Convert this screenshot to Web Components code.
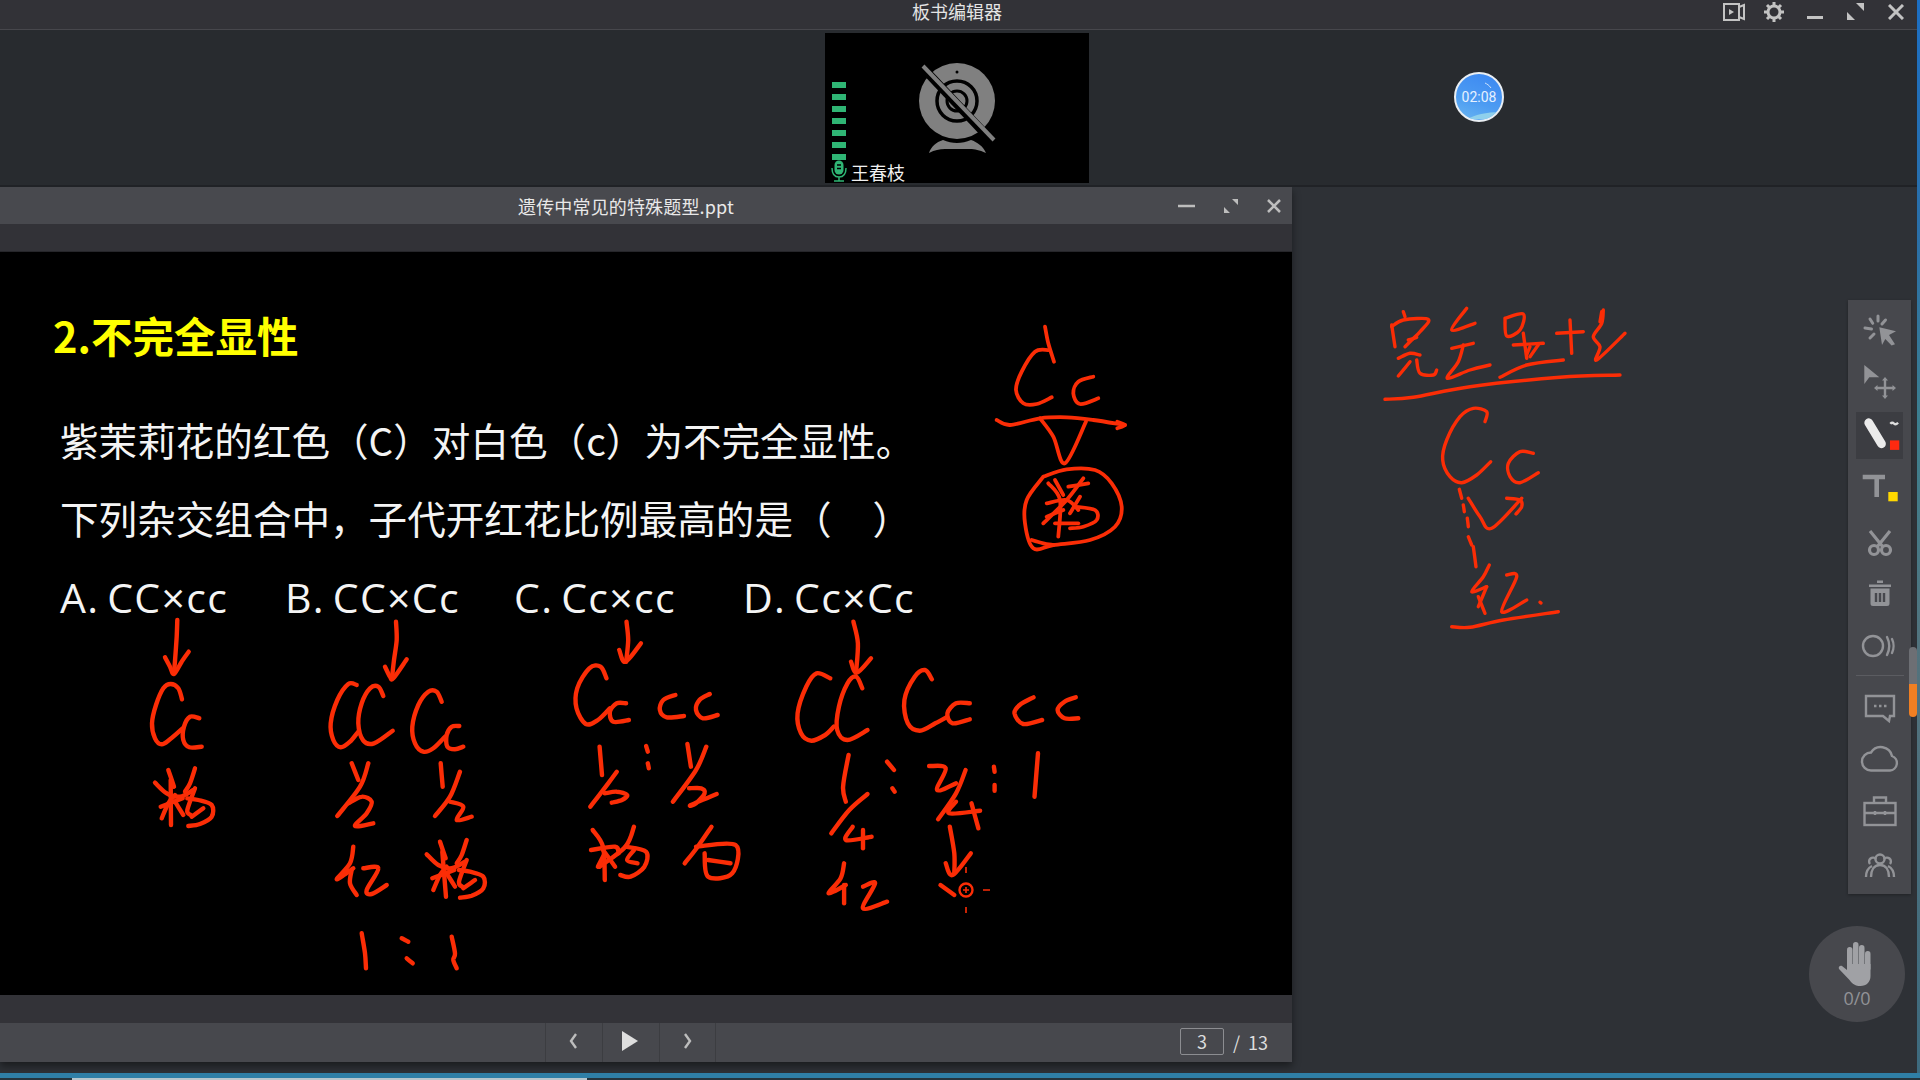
<!DOCTYPE html>
<html lang="zh">
<head>
<meta charset="utf-8">
<title>板书编辑器</title>
<style>
  html, body { margin: 0; height: 100%; background: #2e3136; overflow: hidden; }
  body { font-family: "Noto Sans CJK SC", "Open Sans", sans-serif; }
</style>
</head>
<body>
<desk-screen>
  <app-titlebar title-text="板书编辑器"></app-titlebar>
  <video-strip>
    <video-tile name="王春枝"></video-tile>
    <timer-badge slot="float">02:08</timer-badge>
  </video-strip>
  <work-area>
    <ppt-window title-text="遗传中常见的特殊题型.ppt" page="3" total="13">
      <slide-page></slide-page>
    </ppt-window>
    <side-panel slot="side"></side-panel>
  </work-area>
</desk-screen>

<script>
// handwriting, written in coordinates of the crops I measured from
const INK = {
  slide: [
    { x: 100, y: 620, sx: 1 / 3, sy: 1 / 3, w: 4.4, strokes: [
      "232,0 230,50 226,110 222,160", "195,112 210,140 222,162 245,125 266,95",
      "246,238 235,205 212,192 190,205 168,255 156,310 165,355 185,373 210,358 248,325",
      "298,295 270,290 252,320 250,360 268,382 305,380",
      "205,450 222,500", "285,445 270,490 255,515", "165,488 200,520 240,530 280,510",
      "212,480 213,615", "185,595 205,550 225,525", "225,545 250,585", "182,560 248,535",
      "262,535 295,540 335,555 335,590 300,612 265,618", "285,505 262,570 272,585", "275,590 310,565",
      "888,5 890,60 882,120 876,175", "855,140 870,170 880,175 920,118",
      "770,195 745,192 712,240 692,310 700,360 722,382 750,365 775,335",
      "850,228 835,200 810,205 785,250 775,310 790,362 822,370 878,332",
      "1025,245 1010,215 985,215 955,255 937,320 945,370 970,395 1000,385 1035,350",
      "1078,318 1055,320 1040,345 1042,380 1065,388 1090,380",
      "755,430 775,480", "805,430 780,500 712,588", "745,550 785,530 815,545 800,580 765,618 820,610",
      "1022,430 1028,500", "1080,455 1050,530 1005,588", "1050,545 1090,560 1070,600 1115,590",
      "760,680 750,730 710,778 760,745", "755,750 750,790 770,825", "790,745 835,745 800,810 815,822 860,795",
      "1020,665 1037,715", "1100,660 1085,705 1070,730", "980,703 1015,735 1055,745 1095,725",
      "1027,695 1038,830", "1000,810 1020,765 1040,740", "1040,760 1065,800", "997,775 1063,750",
      "1077,750 1110,755 1150,770 1150,805 1115,827 1080,833", "1100,720 1077,785 1087,800", "1090,805 1125,780",
      "785,940 795,1000 798,1045", "905,955 925,965", "920,1015 938,1030",
      "1055,950 1065,1000 1060,1020 1070,1045"
    ] },
    { x: 560, y: 620, sx: 1 / 2.904, sy: 1 / 3, w: 4.4, strokes: [
      "193,5 198,60 192,125", "172,90 190,125 235,70",
      "135,175 118,140 85,145 50,205 48,265 75,312 110,300 145,265",
      "192,250 165,250 145,275 155,305 200,300",
      "335,225 300,240 290,270 310,292 360,288", "435,222 405,240 395,270 415,295 458,285",
      "115,380 122,465", "165,455 140,490 88,560", "130,520 165,515 195,525 180,540 150,548",
      "250,378 255,395", "255,430 258,445",
      "370,372 380,440", "425,380 395,450 328,545", "375,505 410,505 420,520 395,550 380,555 455,522",
      "95,630 125,680 130,780", "215,620 190,680 115,740", "90,690 160,680 170,700",
      "130,700 110,740", "190,680 250,695 245,740 205,770 175,765", "215,690 195,720 225,730", "125,690 160,740",
      "440,620 400,680 362,730", "395,680 510,675 500,760 430,770 420,700", "430,720 495,730",
      "852,5 865,70 860,155", "845,125 862,158 903,115",
      "785,175 745,160 715,200 690,280 700,340 730,362 770,345 795,320",
      "878,205 860,170 835,190 810,260 805,330 835,360 893,330",
      "1080,178 1060,150 1030,170 1000,240 1010,310 1045,332 1090,310 1125,290",
      "1190,250 1150,250 1125,280 1140,310 1190,298",
      "1375,232 1335,255 1320,280 1345,312 1400,300", "1498,232 1465,245 1445,270 1465,295 1505,295",
      "838,405 822,500 830,545", "950,425 970,450", "965,505 972,515",
      "1072,438 1120,445 1095,510 1150,490", "1178,450 1150,520 1098,598",
      "1150,545 1130,580 1220,572", "1195,550 1215,625",
      "1260,440 1262,455", "1262,495 1262,512", "1388,400 1378,530",
      "893,522 840,570 788,640", "850,620 830,660 905,650", "880,630 880,685",
      "825,730 815,775 780,820 830,795", "825,795 825,850", "880,800 915,790 880,865 950,845",
      "1132,620 1145,700 1145,760", "1120,730 1140,765 1193,700", "1105,795 1145,825"
    ] },
    { x: 980, y: 310, sx: 1 / 3, sy: 1 / 3, w: 3.8, strokes: [
      "195,50 205,100 222,155", "205,120 165,125 125,185 108,240 130,280 170,282 215,262",
      "340,200 295,215 280,250 300,282 355,265",
      "50,330 90,345 180,325 260,322 340,330 435,345", "412,335 435,345 412,355",
      "180,325 220,380 255,460 318,335",
      "190,500 260,478 345,480 395,520 425,590 405,650 330,690 220,705 160,715 135,640 140,570 190,500",
      "155,690 190,700 220,705",
      "225,510 250,555", "310,505 260,570 190,640", "200,580 260,570 295,600", "205,520 240,570 235,680",
      "285,590 345,600 350,630 310,650 270,655", "300,560 270,610", "200,620 250,600",
      "265,530 325,520", "225,640 295,640"
    ] }
  ],
  side: [
    { x: 1370, y: 290, sx: 1 / 3, sy: 1 / 3, w: 3.4, strokes: [
      "100,65 105,80", "65,105 75,170", "65,110 100,90 175,88 150,125 125,150 105,170",
      "115,150 140,142", "85,205 120,190 150,195", "120,215 85,258", "140,210 150,250 190,255 200,240",
      "290,55 245,120 315,100", "245,175 310,160", "280,165 265,215 232,265 300,240 360,225",
      "405,85 460,72 450,120 410,138 405,85", "430,165 520,160", "460,130 470,205", "505,165 480,200", "480,170 470,195",
      "390,262 470,225 580,210",
      "600,90 605,190", "560,130 640,125", "700,60 695,100 670,140 690,170 680,210 765,130", "695,65 690,95",
      "45,328 130,322 300,290 570,262 750,255",
      "345,395 350,365 310,355 270,380 230,450 218,510 240,560 275,578 320,555 362,515",
      "490,490 450,485 415,520 420,560 450,578 505,548",
      "295,625 330,680 365,715 455,625", "410,625 450,630 455,650 438,672",
      "268,598 275,625", "280,645 283,665", "292,685 295,710", "295,740 305,765", "310,770 318,830",
      "358,825 340,860 305,905 350,890", "350,890 325,950", "325,920 345,970",
      "410,855 440,860 395,965 470,930", "510,937 513,939",
      "245,1010 300,1012 400,990 565,965"
    ] }
  ]
};

function smoothPath(str, g) {
  const p = str.split(" ").map((s) => {
    const [a, b] = s.split(",").map(Number);
    return [g.x + a * g.sx, g.y + b * g.sy];
  });
  let d = `M${p[0][0].toFixed(1)} ${p[0][1].toFixed(1)}`;
  for (let i = 0; i < p.length - 1; i++) {
    const p0 = p[i - 1] || p[i], p1 = p[i], p2 = p[i + 1], p3 = p[i + 2] || p2;
    const c1 = [p1[0] + (p2[0] - p0[0]) / 6, p1[1] + (p2[1] - p0[1]) / 6];
    const c2 = [p2[0] - (p3[0] - p1[0]) / 6, p2[1] - (p3[1] - p1[1]) / 6];
    d += `C${c1[0].toFixed(1)} ${c1[1].toFixed(1)} ${c2[0].toFixed(1)} ${c2[1].toFixed(1)} ${p2[0].toFixed(1)} ${p2[1].toFixed(1)}`;
  }
  return d;
}

class DeskScreen extends HTMLElement {
  constructor() {
    super();
    this.attachShadow({ mode: "open" });
    this.shadowRoot.innerHTML = `
      <style>
        :host {
          display: flex;
          width: 1920px;
          height: 1080px;
          flex-direction: column;
          background: #2e3136;
        }
        #row { display: flex; flex: 1; min-height: 0; }
        #app { width: 1917px; display: flex; flex-direction: column; }
        #edge {
          flex: 1;
          background: linear-gradient(180deg, #1c6fc4 0, #2a6fa8 22%, #3d7f8e 40%, #53727c 62%, #3d6a7e 100%);
        }
        #strip {
          height: 7px;
          background: linear-gradient(180deg, #2f7fa6 0 5px, #26343c 5px);
          position: relative;
        }
        #strip i {
          position: absolute; left: 72px; width: 515px; top: 5px; height: 2px; background: #b7c6cc;
        }
      </style>
      <div id="row">
        <div id="app"><slot></slot></div>
        <div id="edge"></div>
      </div>
      <div id="strip"><i></i></div>`;
  }
}

class AppTitlebar extends HTMLElement {
  constructor() {
    super();
    this.attachShadow({ mode: "open" });
    this.shadowRoot.innerHTML = `
      <style>
        :host {
          display: grid;
          grid-template-columns: 1fr auto 1fr;
          height: 30px;
          box-sizing: border-box;
          background: #323237;
          border-bottom: 1px solid #47474c;
          color: #e4e4e4;
          font-size: 18px;
        }
        #title { line-height: 23px; margin-right: 3px; }
        #ctl { display: flex; justify-content: flex-end; padding-right: 1px; }
        #ctl span { width: 40.5px; height: 23px; display: flex; align-items: center; justify-content: center; }
        svg { display: block; fill: none; stroke: #c3c3c3; }
      </style>
      <div></div>
      <div id="title"></div>
      <div id="ctl">
        <span><svg width="24" height="20" viewBox="0 0 24 20" stroke-width="2"><rect x="2" y="2" width="15" height="16"/><path d="M17 5l5-2v14l-5-2"/><path d="M7 7l5 3-5 3z" fill="#c3c3c3" stroke="none"/></svg></span>
        <span><svg width="22" height="22" viewBox="0 0 22 22"><circle cx="11" cy="11" r="6" stroke-width="3"/><path d="M11 1v4M11 17v4M1 11h4M17 11h4M4 4l3 3M15 15l3 3M18 4l-3 3M7 15l-3 3" stroke-width="3"/></svg></span>
        <span><svg width="16" height="20" viewBox="0 0 16 20" stroke-width="3"><path d="M0 15.500h16"/></svg></span>
        <span><svg width="17" height="17" viewBox="0 0 17 17" style="fill:#c3c3c3;stroke:none"><path d="M9 0h8v8zM0 9l8 8H0z"/></svg></span>
        <span><svg width="16" height="16" viewBox="0 0 16 16" stroke-width="3"><path d="M1 1l14 14M15 1L1 15"/></svg></span>
      </div>`;
  }
  connectedCallback() {
    this.shadowRoot.querySelector("#title").textContent = this.getAttribute("title-text");
  }
}

class VideoStrip extends HTMLElement {
  constructor() {
    super();
    this.attachShadow({ mode: "open" });
    this.shadowRoot.innerHTML = `
      <style>
        :host {
          display: flex;
          position: relative;
          justify-content: center;
          height: 157px;
          box-sizing: border-box;
          padding: 3px 3px 0 0;
          background: #282b2f;
          border-bottom: 2px solid #202226;
        }
      </style>
      <slot></slot>
      <slot name="float"></slot>`;
  }
}

class VideoTile extends HTMLElement {
  constructor() {
    super();
    this.attachShadow({ mode: "open" });
    const bars = Array.from({ length: 7 }, () => "<i></i>").join("");
    this.shadowRoot.innerHTML = `
      <style>
        :host {
          display: block;
          position: relative;
          width: 264px;
          height: 150px;
          background: #000;
          color: #f0f0f0;
          font-size: 18px;
        }
        #meter {
          position: absolute; left: 7px; top: 49px;
          display: flex; flex-direction: column; gap: 6px;
        }
        #meter i { display: block; width: 14px; height: 6px; background: #2fb574; }
        #cam { position: absolute; left: 92px; top: 28px; }
        #mic { position: absolute; left: 5px; top: 127px; }
        #name { position: absolute; left: 26px; top: 125.500px; line-height: 26px; }
      </style>
      <div id="meter">${bars}</div>
      <svg id="cam" width="80" height="96" viewBox="0 0 80 96">
        <circle cx="40" cy="40" r="38" fill="#808080"/>
        <circle cx="40" cy="40" r="20" fill="none" stroke="#000" stroke-width="3.500"/>
        <circle cx="40" cy="40" r="10" fill="none" stroke="#000" stroke-width="3"/>
        <circle cx="40" cy="11" r="1.500" fill="#000"/>
        <path d="M6 7l68 72" stroke="#000" stroke-width="9"/>
        <path d="M6 5l71 74" stroke="#808080" stroke-width="4"/>
        <path d="M12 92c2-6 7-11 14-13 9 4 19 4 28 0 6 2 12 6 15 13-7-3-11-4-16-4H28c-6 0-10 1-16 4z" fill="#808080"/>
      </svg>
      <svg id="mic" width="18" height="22" viewBox="0 0 18 22">
        <rect x="4.500" y="0.500" width="9" height="14" rx="4.500" fill="#2fb574"/>
        <path d="M7 5h4M7 8.500h4" stroke="#000" stroke-width="1.600"/>
        <path d="M2 8c0 6 3 9 7 9s7-3 7-9M9 17v4M4 21h10" fill="none" stroke="#2fb574" stroke-width="1.500"/>
      </svg>
      <div id="name"></div>`;
  }
  connectedCallback() {
    this.shadowRoot.querySelector("#name").textContent = this.getAttribute("name");
  }
}

class TimerBadge extends HTMLElement {
  constructor() {
    super();
    this.attachShadow({ mode: "open" });
    this.shadowRoot.innerHTML = `
      <style>
        :host {
          position: absolute;
          left: 1454px;
          top: 42px;
          width: 50px;
          height: 50px;
          box-sizing: border-box;
          border: 2.500px solid #e9eef3;
          border-radius: 50%;
          overflow: hidden;
          display: flex;
          align-items: center;
          justify-content: center;
          background: linear-gradient(200deg, #3a86f2 0%, #4d9cf2 60%, #6ab6f0 100%);
          color: #e6f1ff;
          font: 14px "Roboto", sans-serif;
        }
        svg { position: absolute; left: 0; top: 0; }
        span { position: relative; }
      </style>
      <svg width="45" height="45" viewBox="0 0 45 45">
        <path d="M12 45c6-4 18-7 33-7v7z" fill="#8fd0ec"/>
        <path d="M29 9c2 1 4 2 6 5" fill="none" stroke="#cfe4fb" stroke-width="1"/>
      </svg>
      <span><slot></slot></span>`;
  }
}

class WorkArea extends HTMLElement {
  constructor() {
    super();
    this.attachShadow({ mode: "open" });
    this.shadowRoot.innerHTML = `
      <style>
        :host { display: flex; flex: 1; min-height: 0; background: #2e3136; }
        ::slotted(side-panel) { flex: 1; }
      </style>
      <slot></slot>
      <slot name="side"></slot>`;
  }
}

class PptWindow extends HTMLElement {
  constructor() {
    super();
    this.attachShadow({ mode: "open" });
    this.shadowRoot.innerHTML = `
      <style>
        :host {
          display: flex;
          flex-direction: column;
          width: 1292px;
          height: 875px;
          box-shadow: 0 4px 8px rgba(0, 0, 0, .45);
          color: #e8e8e8;
          font-size: 18px;
        }
        header {
          height: 37px;
          flex: none;
          display: grid;
          grid-template-columns: 1fr auto 1fr;
          align-items: center;
          background: #48494e;
        }
        #title { margin-right: 40px; letter-spacing: .15px; }
        #ctl { display: flex; justify-content: flex-end; align-items: center; padding: 0 10px 0 0; margin-left: -40px; }
        #ctl svg:nth-child(2) { margin: 0 27px 0 28px; }
        svg { display: block; fill: none; stroke: #bdbdbd; }
        #tools { height: 28px; flex: none; background: #323237; border-bottom: 1px solid #26262a; box-sizing: border-box; }
        #body { height: 743px; flex: none; position: relative; background: #000; overflow: hidden; }
        #gap { height: 28px; flex: none; background: #333338; }
        nav {
          height: 39px;
          flex: none;
          display: flex;
          align-items: stretch;
          background: #47484d;
          padding-left: 545px;
          box-sizing: border-box;
        }
        nav button {
          width: 57px;
          padding: 0 0 3px 0;
          background: none;
          border: 0;
          border-left: 1px solid #3c3d41;
          display: flex;
          align-items: center;
          justify-content: center;
        }
        nav button:last-of-type { border-right: 1px solid #3c3d41; }
        #pager {
          margin-left: auto;
          padding-right: 24px;
          display: flex;
          align-items: center;
          gap: 9px;
          font-size: 18px;
          color: #ddd;
          padding-bottom: 2px;
        }
        #total { word-spacing: 4px; }
        #num {
          width: 44px;
          height: 27px;
          box-sizing: border-box;
          border: 1px solid #8c8d91;
          border-radius: 2px;
          text-align: center;
          line-height: 25px;
        }
      </style>
      <header>
        <div></div>
        <div id="title"></div>
        <div id="ctl">
          <svg width="17" height="4" viewBox="0 0 17 4" stroke-width="2.500"><path d="M0 2h17"/></svg>
          <svg width="16" height="16" viewBox="0 0 16 16" style="fill:#bdbdbd;stroke:none"><path d="M9 1h6v6zM1 9l6 6H1z"/></svg>
          <svg width="16" height="16" viewBox="0 0 16 16" stroke-width="2.500"><path d="M2 2l12 12M14 2L2 14"/></svg>
        </div>
      </header>
      <div id="tools"></div>
      <div id="body"><slot></slot></div>
      <div id="gap"></div>
      <nav>
        <button style="padding-right:3px"><svg width="12" height="18" viewBox="0 0 12 18" stroke="#c8c8c8" stroke-width="2.400"><path d="M9 2L4 9l5 7"/></svg></button>
        <button style="padding-right:3px"><svg width="18" height="20" viewBox="0 0 18 20"><path d="M1 0l16 10L1 20z" style="fill:#dedede;stroke:none"/></svg></button>
        <button><svg width="12" height="18" viewBox="0 0 12 18" stroke="#c8c8c8" stroke-width="2.400"><path d="M3 2l5 7-5 7"/></svg></button>
        <div id="pager"><div id="num"></div><span id="total"></span></div>
      </nav>`;
  }
  connectedCallback() {
    const root = this.shadowRoot;
    root.querySelector("#title").textContent = this.getAttribute("title-text");
    root.querySelector("#num").textContent = this.getAttribute("page");
    root.querySelector("#total").textContent = `/ ${this.getAttribute("total")}`;
  }
}

class InkLayer extends HTMLElement {
  constructor() {
    super();
    this.attachShadow({ mode: "open" });
  }
  connectedCallback() {
    const groups = INK[this.getAttribute("set")];
    const paths = groups
      .map((g) => g.strokes
        .map((s) => `<path d="${smoothPath(s, g)}" stroke-width="${g.w}"/>`)
        .join(""))
      .join("");
    this.shadowRoot.innerHTML = `
      <style>
        :host { position: absolute; inset: 0; display: block; pointer-events: none; }
        svg { display: block; width: 100%; height: 100%; }
      </style>
      <svg viewBox="${this.getAttribute("view")}" fill="none" stroke="#fb2d06" stroke-linecap="round" stroke-linejoin="round">
        ${paths}
        ${this.hasAttribute("cursor") ? `
          <circle cx="966" cy="890" r="6.500" stroke-width="2.400"/>
          <path d="M963 890h6M966 887v6M966 867v6M966 907v6M983 890h7" stroke-width="1.600" stroke-linecap="butt"/>` : ""}
      </svg>`;
  }
}

class SlidePage extends HTMLElement {
  constructor() {
    super();
    this.attachShadow({ mode: "open" });
    this.shadowRoot.innerHTML = `
      <style>
        :host {
          display: block;
          height: 100%;
          box-sizing: border-box;
          padding: 59px 0 0 60px;
          color: #f4f4f4;
          font: 38.600px "Open Sans", "Noto Sans CJK SC", sans-serif;
        }
        h1 {
          margin: 0 0 41px -7px;
          font: bold 41.500px/48px "Noto Sans CJK SC", sans-serif;
          color: #ffff00;
        }
        p { margin: 0; line-height: 78px; white-space: pre; font-family: "Noto Sans CJK SC", sans-serif; }
        #opts {
          display: grid;
          grid-template-columns: 225px 229px 229px auto;
          line-height: 78px;
          font-size: 41px;
          letter-spacing: 1.3px;
          word-spacing: -4px;
          margin-top: 2px;
        }
        #opts span { white-space: pre; }
      </style>
      <h1>2.不完全显性</h1>
      <p>紫茉莉花的红色（C）对白色（c）为不完全显性。</p>
      <p>下列杂交组合中，子代开红花比例最高的是（&#8195;&#8202;）</p>
      <div id="opts">
        <span>A. CC×cc</span>
        <span>B. CC×Cc</span>
        <span>C. Cc×cc</span>
        <span>D. Cc×Cc</span>
      </div>
      <ink-layer set="slide" view="0 252 1292 743" cursor></ink-layer>`;
  }
}

class ToolRail extends HTMLElement {
  constructor() {
    super();
    this.attachShadow({ mode: "open" });
    const ico = (body, dy = 0) => `<span class="it"><svg width="48" height="48" viewBox="0 0 48 48" style="transform:translateY(${dy}px)">${body}</svg></span>`;
    this.shadowRoot.innerHTML = `
      <style>
        :host {
          display: block;
          width: 63px;
          height: 594px;
          box-sizing: border-box;
          padding-top: 3.600px;
          background: #47484d;
          box-shadow: 0 1px 3px rgba(0, 0, 0, .3);
        }
        .it { height: 52.700px; display: flex; align-items: center; justify-content: center; }
        .it svg { display: block; fill: none; stroke: #929397; stroke-width: 2.400; }
        .f { fill: #929397; stroke: none; }
        .on svg { background: #3c3d42; width: 47px; height: 47px; }
        hr { border: 0; height: 1px; background: #5b5c61; margin: 3px 7px 5px 8px; }
      </style>
      ${ico(`<path class="f" d="M23.300 21.300L40 25.300l-7 3.700 6 9.300-3.400 1.300-6.300-6.600L26 39z"/><path stroke-width="3" stroke-linecap="round" d="M14 13l2.700 4.300M22 10v5M29.500 14L26 18M9 22l6.500 1M14 32l4-4"/>`)}
      ${ico(`<path class="f" d="M8.300 8l15 12.300h-10l-5 6.700z"/><path d="M29 22v18M20 31h18" /><path class="f" d="M29 20l3 3.500h-6zM29 42l3-3.500h-6zM18 31l3.500-3v6zM40 31l-3.500-3v6z"/>`, -2)}
      <span class="it on"><svg viewBox="0 0 48 48"><path style="stroke:#ebebeb;stroke-width:9" stroke-linecap="round" d="M13 11l13 21.500"/><path style="stroke:#ddd" d="M35 12c2-2 3-1 4 0s2 1 4-1"/><rect x="34.700" y="29" width="9.500" height="9.700" style="fill:#ff2a10;stroke:none"/></svg></span>
      ${ico(`<path class="f" d="M6.700 11.700H29v4.600h-6V34h-4.600V16.300H6.700z"/><rect x="32.300" y="29" width="9.400" height="9.300" style="fill:#ffd800;stroke:none"/>`, -1)}
      ${ico(`<g stroke-width="3.200"><circle cx="18" cy="31" r="4.500"/><circle cx="30" cy="31" r="4.500"/><path d="M14 12l13 16M34 12L21 28"/></g>`, 2)}
      ${ico(`<path class="f" d="M21 9.500h6v2.500h-6zM13 13.500h22v2.500H13zM14.500 17.500h19v15a2.500 2.500 0 0 1-2.500 2.500H17a2.500 2.500 0 0 1-2.500-2.500z"/><path style="stroke:#47484d" d="M20 22v9M24 22v9M28 22v9"/>`, 2)}
      ${ico(`<circle cx="17" cy="24" r="10"/><path stroke-linecap="round" d="M31 15c3 6 3 12 0 18M36 17c2 4 2 10 0 14"/>`)}
      <hr>
      ${ico(`<path d="M10 12h28v20h-4l-1 5-6-5H10z"/><path stroke-width="2.400" d="M18 22h2.500M23 22h2.500M28 22h2.500"/>`)}
      ${ico(`<path d="M15 35.500h19a7.500 7.500 0 0 0 2-14.500A11.500 11.500 0 0 0 15 17.500 9 9 0 0 0 15 35.500z"/>`, -1)}
      ${ico(`<rect x="8.500" y="16" width="31" height="22"/><path d="M18 16v-5.500h12V16M8.500 26h31M19 24v4M29 24v4"/>`, -2)}
      ${ico(`<circle cx="24" cy="17" r="4.500"/><path d="M14 22a3.500 3.500 0 1 1 6-5M34 22a3.500 3.500 0 1 0-6-5M10 35c0-6 2-9 6-11M38 35c0-6-2-9-6-11M15 35c0-7 3-12 9-12s9 5 9 12"/>`)}`;
  }
}

class SidePanel extends HTMLElement {
  constructor() {
    super();
    this.attachShadow({ mode: "open" });
    this.shadowRoot.innerHTML = `
      <style>
        :host {
          display: flex;
          position: relative;
          flex-direction: column;
          align-items: flex-end;
          padding-top: 113px;
        }
        tool-rail { margin-right: 6px; }
        #scroll {
          position: absolute; right: 0; top: 460px;
          width: 8px; height: 70px; border-radius: 4px;
          background: linear-gradient(180deg, #6d6f74 0 37px, #f07f22 37px);
        }
        #hand {
          margin: 32px 12px 0 0;
          width: 96px;
          height: 96px;
          border-radius: 50%;
          background: #47484d;
          display: flex;
          flex-direction: column;
          align-items: center;
          padding-top: 16px;
          box-sizing: border-box;
          color: #929397;
          font: 18px/24px "Open Sans", sans-serif;
        }
        #hand svg { display: block; margin-left: -3px; }
      </style>
      <ink-layer set="side" view="1292 187 625 886"></ink-layer>
      <tool-rail></tool-rail>
      <div id="scroll"></div>
      <div id="hand">
        <svg width="36" height="44" viewBox="0 0 36 44" fill="#a0a1a5">
          <rect x="9" y="5" width="5.500" height="24" rx="2.700"/>
          <rect x="15" y="0" width="5.500" height="28" rx="2.700"/>
          <rect x="21" y="3" width="5.500" height="25" rx="2.700"/>
          <rect x="27" y="9" width="5.500" height="20" rx="2.700"/>
          <path d="M9 22h23.500v12c0 6-4 10-10 10-5 0-8-2-11-6L1 27c-1-2 1-4 3-3l5 4z"/>
        </svg>
        <span>0/0</span>
      </div>`;
  }
}

customElements.define("desk-screen", DeskScreen);
customElements.define("app-titlebar", AppTitlebar);
customElements.define("video-strip", VideoStrip);
customElements.define("video-tile", VideoTile);
customElements.define("timer-badge", TimerBadge);
customElements.define("work-area", WorkArea);
customElements.define("ppt-window", PptWindow);
customElements.define("ink-layer", InkLayer);
customElements.define("slide-page", SlidePage);
customElements.define("tool-rail", ToolRail);
customElements.define("side-panel", SidePanel);
</script>
</body>
</html>
